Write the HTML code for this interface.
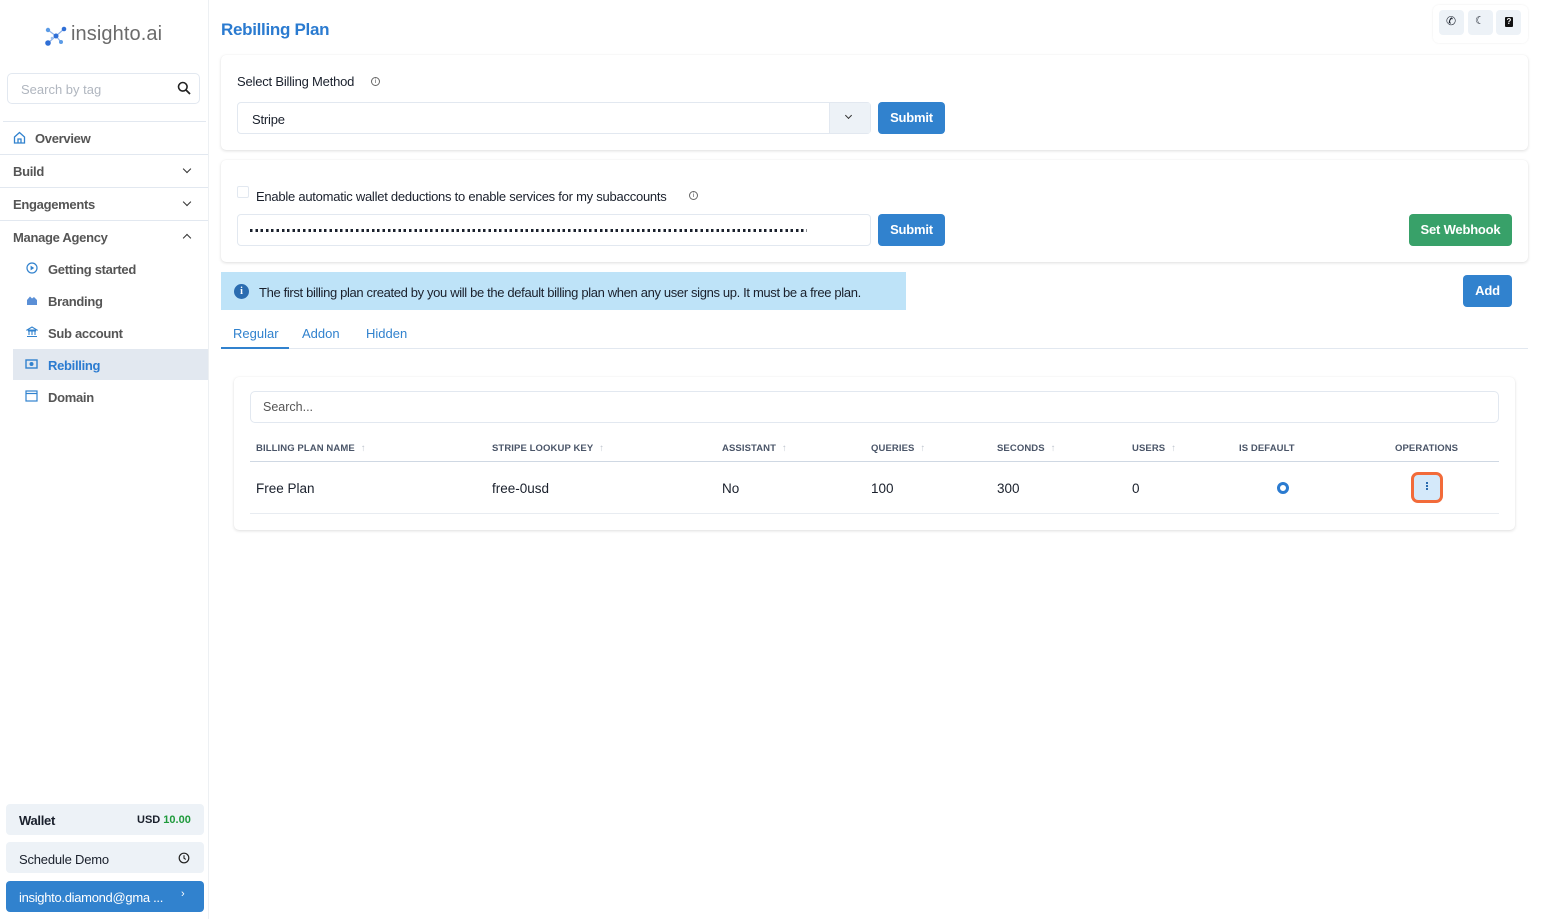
<!DOCTYPE html>
<html><head><meta charset="utf-8"><style>
*{box-sizing:border-box;margin:0;padding:0}
body{width:1541px;height:919px;background:#fff;font-family:"Liberation Sans",sans-serif;position:relative;overflow:hidden;color:#1a202c}
.a{position:absolute}
.side{left:0;top:0;width:209px;height:919px;border-right:1px solid #edf0f3;background:#fff}
.hl{height:1px;background:#e2e8f0;left:0;width:208px}
.nav{font-size:13px;font-weight:bold;color:#555;letter-spacing:-0.3px}
.chev{width:6px;height:6px;border-right:1.6px solid #333;border-bottom:1.6px solid #333}
.card{background:#fff;border-radius:5px;box-shadow:0 1px 3px rgba(0,0,0,0.13),0 0 1px rgba(0,0,0,0.06)}
.inp{border:1px solid #e2e8f0;border-radius:4px;background:#fff}
.btn{color:#fff;font-weight:bold;font-size:13px;border-radius:4px;text-align:center;line-height:31px;letter-spacing:-0.2px}
.th{font-size:9.5px;font-weight:bold;color:#4a5568;top:443px;letter-spacing:0.1px}
.th span{color:#c0c6cf;margin-left:6px;font-weight:normal}
.td{font-size:13.5px;color:#1a202c;top:481px}
.sub{font-size:13px;font-weight:bold;color:#555;letter-spacing:-0.3px}
</style></head><body>
<div class="a side"></div>
<svg class="a" style="left:44px;top:25px" width="24" height="22" viewBox="0 0 24 22">
<g stroke="#8fb3ea" stroke-width="1.2"><line x1="4" y1="5" x2="12" y2="11"/><line x1="20" y1="4" x2="12" y2="11"/><line x1="12" y1="11" x2="4" y2="18"/><line x1="12" y1="11" x2="17" y2="17"/></g>
<circle cx="4" cy="5" r="2.2" fill="#5b9be6"/><circle cx="20" cy="4" r="2.3" fill="#2f6fd6"/><circle cx="12" cy="11" r="2.5" fill="#2f6fd6"/><circle cx="4" cy="18" r="2.8" fill="#2f6fd6"/><circle cx="17" cy="17" r="2" fill="#5b9be6"/><circle cx="8" cy="13" r="1.3" fill="#9cc0f0"/></svg>
<div class="a" style="left:71px;top:23px;font-size:20px;color:#6b6b6b;letter-spacing:0.1px">insighto.ai</div>
<div class="a inp" style="left:7px;top:73px;width:193px;height:31px;border-radius:5px"></div>
<div class="a" style="left:21px;top:82px;font-size:13px;color:#b0b6bf">Search by tag</div>
<svg class="a" style="left:177px;top:81px" width="14" height="14" viewBox="0 0 14 14"><circle cx="5.8" cy="5.8" r="4.3" fill="none" stroke="#222" stroke-width="1.6"/><line x1="9" y1="9" x2="13" y2="13" stroke="#222" stroke-width="1.8"/></svg>
<div class="a hl" style="top:121px;left:3px;width:203px"></div>
<svg class="a" style="left:13px;top:131px" width="13" height="13" viewBox="0 0 13 13"><path d="M1.5 6L6.5 1.5 11.5 6V12H1.5Z M5 12V8H8V12" fill="none" stroke="#3182ce" stroke-width="1.3"/></svg>
<div class="a nav" style="left:35px;top:131px">Overview</div>
<div class="a hl" style="top:154px"></div>
<div class="a nav" style="left:13px;top:164px">Build</div>
<div class="a chev" style="left:184px;top:166px;transform:rotate(45deg)"></div>
<div class="a hl" style="top:187px"></div>
<div class="a nav" style="left:13px;top:197px">Engagements</div>
<div class="a chev" style="left:184px;top:199px;transform:rotate(45deg)"></div>
<div class="a hl" style="top:220px"></div>
<div class="a nav" style="left:13px;top:230px">Manage Agency</div>
<div class="a chev" style="left:184px;top:235px;transform:rotate(225deg)"></div>
<svg class="a" style="left:26px;top:262px" width="12" height="12" viewBox="0 0 12 12"><circle cx="6" cy="6" r="5" fill="none" stroke="#3182ce" stroke-width="1.2"/><path d="M4.6 3.6L8.2 6 4.6 8.4Z" fill="#3182ce"/></svg>
<div class="a sub" style="left:48px;top:262px">Getting started</div>
<svg class="a" style="left:26px;top:294px" width="12" height="12" viewBox="0 0 12 12"><path d="M1 11V6L4 2.5 6 4.5 8 3 11 6V11Z" fill="#5a8fd6"/></svg>
<div class="a sub" style="left:48px;top:294px">Branding</div>
<svg class="a" style="left:26px;top:326px" width="12" height="12" viewBox="0 0 12 12"><path d="M1 4L6 1 11 4Z M2 5H10 M3 5V9 M6 5V9 M9 5V9 M1 10.5H11" fill="none" stroke="#3182ce" stroke-width="1.1"/></svg>
<div class="a sub" style="left:48px;top:326px">Sub account</div>
<div class="a" style="left:13px;top:349px;width:195px;height:31px;background:#e2e8f0"></div>
<svg class="a" style="left:25px;top:358px" width="13" height="12" viewBox="0 0 13 12"><rect x="1" y="2" width="11" height="8" fill="none" stroke="#3182ce" stroke-width="1.4"/><circle cx="6.5" cy="6" r="2" fill="#3182ce"/></svg>
<div class="a sub" style="left:48px;top:358px;color:#2b7bd0">Rebilling</div>
<svg class="a" style="left:25px;top:390px" width="13" height="12" viewBox="0 0 13 12"><rect x="1" y="1" width="11" height="10" fill="none" stroke="#3182ce" stroke-width="1.2"/><line x1="1" y1="3.5" x2="12" y2="3.5" stroke="#3182ce" stroke-width="1.2"/></svg>
<div class="a sub" style="left:48px;top:390px">Domain</div>
<div class="a" style="left:6px;top:804px;width:198px;height:31px;background:#edf2f7;border-radius:4px"></div>
<div class="a" style="left:19px;top:813px;font-size:13px;font-weight:bold;letter-spacing:-0.3px">Wallet</div>
<div class="a" style="left:137px;top:814px;font-size:11px;font-weight:bold">USD <span style="color:#1f9a3c">10.00</span></div>
<div class="a" style="left:6px;top:842px;width:198px;height:31px;background:#edf2f7;border-radius:4px"></div>
<div class="a" style="left:19px;top:852px;font-size:13px;letter-spacing:-0.2px">Schedule Demo</div>
<svg class="a" style="left:178px;top:852px" width="12" height="12" viewBox="0 0 12 12"><circle cx="6" cy="6" r="4.8" fill="none" stroke="#222" stroke-width="1.2"/><path d="M6 3.3V6.2L7.8 7.4" fill="none" stroke="#222" stroke-width="1.1"/></svg>
<div class="a" style="left:6px;top:881px;width:198px;height:31px;background:#3182ce;border-radius:4px"></div>
<div class="a" style="left:19px;top:890px;font-size:13px;color:#fff;letter-spacing:-0.3px">insighto.diamond@gma ...</div>
<div class="a" style="left:181px;top:888px;font-size:11px;color:#fff">›</div>
<div class="a" style="left:221px;top:20px;font-size:17px;font-weight:bold;color:#2b7bd0;letter-spacing:-0.3px">Rebilling Plan</div>
<div class="a" style="left:1433px;top:5px;width:95px;height:38px;background:#fff;border-radius:6px;box-shadow:0 0 2px rgba(0,0,0,0.08)"></div>
<div class="a" style="left:1439px;top:10px;width:25px;height:25px;background:#edf2f7;border-radius:4px"></div>
<div class="a" style="left:1468px;top:10px;width:25px;height:25px;background:#edf2f7;border-radius:4px"></div>
<div class="a" style="left:1496px;top:10px;width:25px;height:25px;background:#edf2f7;border-radius:4px"></div>
<div class="a" style="left:1446px;top:14px;font-size:12px">✆</div>
<div class="a" style="left:1475px;top:14px;font-size:11px">☾</div>
<div class="a" style="left:1505px;top:17px;width:8px;height:10px;background:#111;border-radius:1px;color:#fff;font-size:8px;font-weight:bold;text-align:center;line-height:10px">?</div>
<div class="a card" style="left:221px;top:55px;width:1307px;height:95px"></div>
<div class="a" style="left:237px;top:74px;font-size:13px;color:#1a202c;letter-spacing:-0.2px">Select Billing Method</div>
<div class="a" style="left:371px;top:77px;width:9px;height:9px;border:1px solid #666;border-radius:50%;font-size:6px;text-align:center;line-height:8px;color:#444">i</div>
<div class="a inp" style="left:237px;top:102px;width:634px;height:32px"></div>
<div class="a" style="left:829px;top:103px;width:41px;height:30px;background:#edf2f7;border-left:1px solid #e2e8f0"></div>
<div class="a chev" style="left:846px;top:113px;transform:rotate(45deg);width:5px;height:5px;border-width:1.4px"></div>
<div class="a" style="left:252px;top:112px;font-size:13px;letter-spacing:-0.2px">Stripe</div>
<div class="a btn" style="left:878px;top:102px;width:67px;height:32px;background:#3182ce">Submit</div>
<div class="a card" style="left:221px;top:160px;width:1307px;height:102px"></div>
<div class="a" style="left:237px;top:186px;width:12px;height:12px;border:1px solid #e2e8f0;border-radius:2px"></div>
<div class="a" style="left:256px;top:189px;font-size:13px;letter-spacing:-0.25px">Enable automatic wallet deductions to enable services for my subaccounts</div>
<div class="a" style="left:689px;top:191px;width:9px;height:9px;border:1px solid #666;border-radius:50%;font-size:6px;text-align:center;line-height:8px;color:#444">i</div>
<div class="a inp" style="left:237px;top:214px;width:634px;height:32px"></div>
<div class="a" style="left:250px;top:229px;width:557px;height:3px;background:repeating-linear-gradient(90deg,#1a202c 0 2.5px,transparent 2.5px 5.3px)"></div>
<div class="a btn" style="left:878px;top:214px;width:67px;height:32px;background:#3182ce">Submit</div>
<div class="a btn" style="left:1409px;top:214px;width:103px;height:32px;background:#38a169">Set Webhook</div>
<div class="a" style="left:221px;top:272px;width:685px;height:38px;background:#bee3f8"></div>
<div class="a" style="left:234px;top:284px;width:15px;height:15px;border-radius:50%;background:#2b6cb0;color:#fff;font-size:10px;font-weight:bold;text-align:center;line-height:15px;font-family:'Liberation Serif',serif">i</div>
<div class="a" style="left:259px;top:285px;font-size:13px;letter-spacing:-0.35px">The first billing plan created by you will be the default billing plan when any user signs up. It must be a free plan.</div>
<div class="a btn" style="left:1463px;top:275px;width:49px;height:32px;background:#3182ce">Add</div>
<div class="a" style="left:221px;top:348px;width:1307px;height:1px;background:#e2e8f0"></div>
<div class="a" style="left:221px;top:347px;width:68px;height:2px;background:#3182ce"></div>
<div class="a" style="left:233px;top:326px;font-size:13px;color:#3182ce">Regular</div>
<div class="a" style="left:302px;top:326px;font-size:13px;color:#3182ce">Addon</div>
<div class="a" style="left:366px;top:326px;font-size:13px;color:#3182ce">Hidden</div>
<div class="a card" style="left:234px;top:377px;width:1281px;height:153px"></div>
<div class="a inp" style="left:250px;top:391px;width:1249px;height:32px;border-radius:5px"></div>
<div class="a" style="left:263px;top:400px;font-size:12.5px;color:#555">Search...</div>
<div class="a th" style="left:256px">BILLING PLAN NAME<span>↑</span></div>
<div class="a th" style="left:492px">STRIPE LOOKUP KEY<span>↑</span></div>
<div class="a th" style="left:722px">ASSISTANT<span>↑</span></div>
<div class="a th" style="left:871px">QUERIES<span>↑</span></div>
<div class="a th" style="left:997px">SECONDS<span>↑</span></div>
<div class="a th" style="left:1132px">USERS<span>↑</span></div>
<div class="a th" style="left:1239px">IS DEFAULT</div>
<div class="a th" style="left:1395px">OPERATIONS</div>
<div class="a" style="left:250px;top:461px;width:1249px;height:1px;background:#cfd8e3"></div>
<div class="a td" style="left:256px">Free Plan</div>
<div class="a td" style="left:492px">free-0usd</div>
<div class="a td" style="left:722px">No</div>
<div class="a td" style="left:871px">100</div>
<div class="a td" style="left:997px">300</div>
<div class="a td" style="left:1132px">0</div>
<div class="a" style="left:1277px;top:482px;width:12px;height:12px;border-radius:50%;border:3.5px solid #2b7bd0"></div>
<div class="a" style="left:1411px;top:472px;width:32px;height:31px;border:3px solid #f26b3a;border-radius:7px;background:#d4e9fa"></div>
<div class="a" style="left:1426px;top:482px;width:2px;height:2px;background:#2b6cb0;box-shadow:0 3px 0 #2b6cb0,0 6px 0 #2b6cb0"></div>
<div class="a" style="left:250px;top:513px;width:1249px;height:1px;background:#e8ecf1"></div>
</body></html>
